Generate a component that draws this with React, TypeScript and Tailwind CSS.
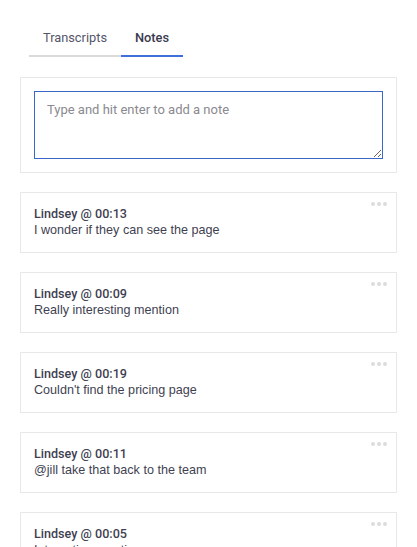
import React from "react";

interface Note {
  author: string;
  time: string;
  text: string;
}

const notes: Note[] = [
  { author: "Lindsey", time: "00:13", text: "I wonder if they can see the page" },
  { author: "Lindsey", time: "00:09", text: "Really interesting mention" },
  { author: "Lindsey", time: "00:19", text: "Couldn't find the pricing page" },
  { author: "Lindsey", time: "00:11", text: "@jill take that back to the team" },
  { author: "Lindsey", time: "00:05", text: "Interesting mention" },
  { author: "Lindsey", time: "00:02", text: "Nice intro" },
];

const NoteCard = ({ author, time, text }: Note) => {
  return (
    <div className="relative border border-[#e8e8ea] bg-white px-[13px] py-[13px]">
      <div className="absolute right-[9px] top-[9px] flex gap-[2px]">
        <span className="h-[4px] w-[4px] rounded-full bg-[#dcdcdf]" />
        <span className="h-[4px] w-[4px] rounded-full bg-[#dcdcdf]" />
        <span className="h-[4px] w-[4px] rounded-full bg-[#dcdcdf]" />
      </div>
      <div className="font-['Roboto'] text-[12.6px] font-medium leading-[16px] text-[#3f3f52]">
        {author} @ {time}
      </div>
      <div className="font-['Liberation_Sans',Arial,sans-serif] text-[12.6px] leading-[17px] text-[#3f3f52]">
        {text}
      </div>
    </div>
  );
};

export default function App() {
  return (
    <div className="min-h-screen bg-white px-5 pb-10 font-['Roboto',sans-serif]">
      <div className="ml-[9px] flex pt-[30px]">
        <button className="w-[92px] border-b-2 border-[#dadadc] pb-[9px] text-[12.8px] leading-[16px] text-[#55556a]">
          Transcripts
        </button>
        <button className="w-[62px] border-b-2 border-[#3f6fd8] pb-[9px] text-[12.8px] font-medium leading-[16px] text-[#3a3a4e]">
          Notes
        </button>
      </div>

      <div className="mt-[20px] border border-[#e8e8ea] p-[13px]">
        <textarea
          placeholder="Type and hit enter to add a note"
          className="block h-[68px] w-full resize-y border border-[#3a68c8] px-[12px] py-[10px] font-['Roboto'] text-[13px] leading-[16px] text-[#333] outline-none placeholder:text-[#8a8a90]"
        />
      </div>

      <div className="mt-[19px] flex flex-col gap-[19px]">
        {notes.map((n, i) => (
          <NoteCard key={i} {...n} />
        ))}
      </div>
    </div>
  );
}
